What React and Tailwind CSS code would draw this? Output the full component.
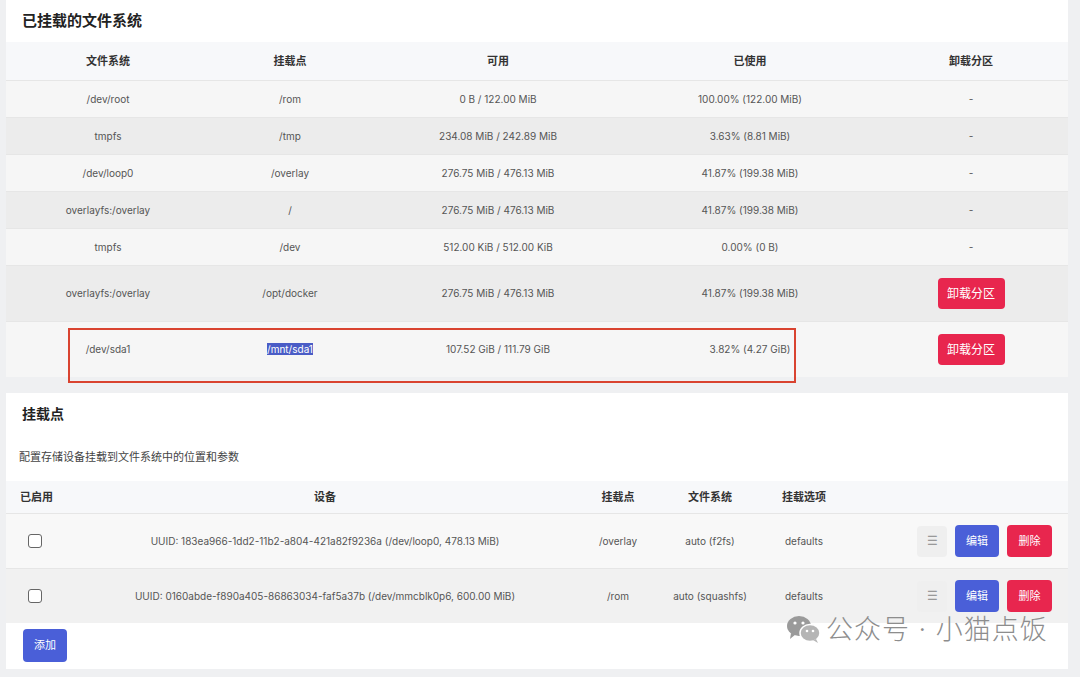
import React from 'react';

const mounted = [
  { fs: '/dev/root', mp: '/rom', avail: '0 B / 122.00 MiB', used: '100.00% (122.00 MiB)', btn: false },
  { fs: 'tmpfs', mp: '/tmp', avail: '234.08 MiB / 242.89 MiB', used: '3.63% (8.81 MiB)', btn: false },
  { fs: '/dev/loop0', mp: '/overlay', avail: '276.75 MiB / 476.13 MiB', used: '41.87% (199.38 MiB)', btn: false },
  { fs: 'overlayfs:/overlay', mp: '/', avail: '276.75 MiB / 476.13 MiB', used: '41.87% (199.38 MiB)', btn: false },
  { fs: 'tmpfs', mp: '/dev', avail: '512.00 KiB / 512.00 KiB', used: '0.00% (0 B)', btn: false },
  { fs: 'overlayfs:/overlay', mp: '/opt/docker', avail: '276.75 MiB / 476.13 MiB', used: '41.87% (199.38 MiB)', btn: true },
  { fs: '/dev/sda1', mp: '/mnt/sda1', avail: '107.52 GiB / 111.79 GiB', used: '3.82% (4.27 GiB)', btn: true, sel: true },
];

const mounts = [
  { dev: 'UUID: 183ea966-1dd2-11b2-a804-421a82f9236a (/dev/loop0, 478.13 MiB)', mp: '/overlay', fs: 'auto (f2fs)', opt: 'defaults' },
  { dev: 'UUID: 0160abde-f890a405-86863034-faf5a37b (/dev/mmcblk0p6, 600.00 MiB)', mp: '/rom', fs: 'auto (squashfs)', opt: 'defaults' },
];

const cols1 = 'grid grid-cols-[204px_160px_256px_248px_194px]';
const cols2 = 'grid grid-cols-[76px_486px_100px_84px_104px_1fr]';

const WeChatIcon = () => (
  <svg width="36" height="30" viewBox="0 0 36 30">
    <ellipse cx="13" cy="12" rx="12" ry="10" fill="#9a9a9a" />
    <path d="M5 19 L4 25 L10 20 Z" fill="#9a9a9a" />
    <ellipse cx="24" cy="19" rx="10" ry="8.5" fill="#b5b5b5" stroke="#fff" strokeWidth="1.5" />
    <path d="M30 25 L32 29 L27 26 Z" fill="#b5b5b5" />
    <circle cx="9" cy="9" r="1.6" fill="#fff" />
    <circle cx="17" cy="9" r="1.6" fill="#fff" />
    <circle cx="21" cy="17" r="1.3" fill="#fff" />
    <circle cx="27" cy="17" r="1.3" fill="#fff" />
  </svg>
);

export default function App() {
  return (
    <div className="relative w-[1080px] h-[677px] overflow-hidden bg-[#eff0f2] pl-[6px] font-['Inter','Noto_Sans_CJK_SC',sans-serif] text-[#555]">
      <div className="w-[1062px]">
        {/* mounted filesystems */}
        <div className="bg-white">
          <div className="h-[42px] flex items-center pl-4 text-[15px] font-bold text-[#222]">已挂载的文件系统</div>
          <div className={`${cols1} h-[38px] items-center bg-[#f7f8fa] text-[11px] font-semibold text-[#333] text-center`}>
            <div>文件系统</div>
            <div>挂载点</div>
            <div>可用</div>
            <div>已使用</div>
            <div>卸载分区</div>
          </div>
          {mounted.map((r, i) => (
            <div
              key={i}
              className={`${cols1} ${r.btn ? 'h-[56px]' : 'h-[37px]'} items-center text-center text-[10px] border-t border-[#e6e6e6] ${i % 2 === 0 ? 'bg-[#f6f6f6]' : 'bg-[#ececec]'}`}
            >
              <div>{r.fs}</div>
              <div>{r.sel ? <span className="bg-[#4a5cc6] text-white">{r.mp}</span> : r.mp}</div>
              <div>{r.avail}</div>
              <div>{r.used}</div>
              <div className="flex justify-center">
                {r.btn ? (
                  <button className="h-[31px] w-[67px] rounded bg-[#e8264e] text-white text-[12px]">卸载分区</button>
                ) : (
                  '-'
                )}
              </div>
            </div>
          ))}
        </div>

        {/* mount points */}
        <div className="bg-white mt-[16px] pb-[7px]">
          <div className="h-[40px] flex items-center pl-4 text-[14px] font-bold text-[#222]">挂载点</div>
          <div className="h-[48px] flex items-center pl-[13px] text-[11px] text-[#444]">配置存储设备挂载到文件系统中的位置和参数</div>
          <div className={`${cols2} h-[32px] items-center bg-[#f7f8fa] text-[11px] font-semibold text-[#333]`}>
            <div className="pl-[14px]">已启用</div>
            <div className="text-center">设备</div>
            <div className="text-center">挂载点</div>
            <div className="text-center">文件系统</div>
            <div className="text-center">挂载选项</div>
            <div />
          </div>
          {mounts.map((m, i) => (
            <div
              key={i}
              className={`${cols2} h-[55px] items-center text-[10px] border-t border-[#e6e6e6] ${i === 0 ? 'bg-[#f8f8f8]' : 'bg-[#f1f1f1]'}`}
            >
              <div className="pl-[22px]">
                <div className="w-[14px] h-[14px] rounded-[3px] border border-[#666] bg-white" />
              </div>
              <div className="text-center whitespace-nowrap">{m.dev}</div>
              <div className="text-center">{m.mp}</div>
              <div className="text-center whitespace-nowrap">{m.fs}</div>
              <div className="text-center">{m.opt}</div>
              <div className="flex justify-end items-center gap-2 pr-4">
                <div className="w-[30px] h-[31px] rounded bg-[#efefef] flex items-center justify-center text-[#999] text-[12px]">☰</div>
                <button className="w-[44px] h-[32px] rounded bg-[#4a5fd8] text-white text-[11px]">编辑</button>
                <button className="w-[45px] h-[32px] rounded bg-[#e8264e] text-white text-[11px]">删除</button>
              </div>
            </div>
          ))}
          <div className="pl-[17px] pt-[6px]">
            <button className="w-[44px] h-[33px] rounded bg-[#4a5fd8] text-white text-[11px]">添加</button>
          </div>
        </div>
      </div>

      {/* annotation box */}
      <div className="absolute left-[68px] top-[328px] w-[728px] h-[55px] border-2 border-[#d94330]" />

      {/* watermark */}
      <div className="absolute left-[786px] top-[614px] flex items-center gap-1 pointer-events-none">
        <WeChatIcon />
        <span className="text-[27px] leading-none text-[#8d8d8d] font-light tracking-[1px]">公众号 · 小猫点饭</span>
      </div>
    </div>
  );
}
